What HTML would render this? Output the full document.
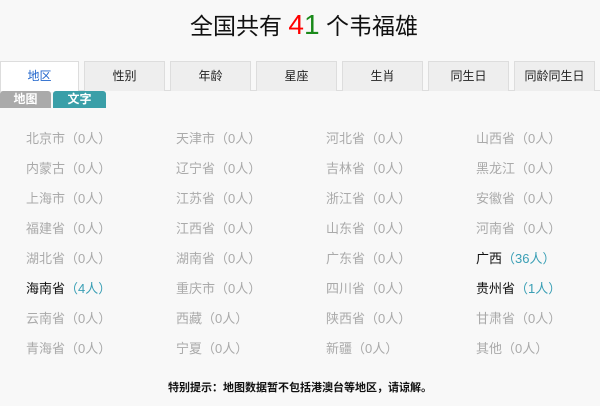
<!DOCTYPE html>
<html><head><meta charset="utf-8"><style>
*{margin:0;padding:0;box-sizing:border-box}
body{width:600px;height:406px;background:#f8f8f8;font-family:"Liberation Sans","Noto Sans CJK SC",sans-serif;position:relative;overflow:hidden}
.t{position:absolute;top:9px;left:0;width:608px;text-align:center;font-size:23px;color:#111;line-height:32px}
.t .a{color:#f00;font-size:28px}.t .b{color:#1a8a1a;font-size:28px}
.tabs{position:absolute;top:61px;left:0;width:600px;height:30px;border-bottom:1px solid #ddd}
.tab{position:absolute;top:0;height:30px;width:81px;background:#eee;border:1px solid #ddd;border-bottom:none;text-align:center;line-height:28px;font-size:12px;color:#222}
.tab.on{background:#fff;color:#2266cc;left:0;width:79px;height:31px}
.sub{position:absolute;top:91px;height:17px;font-size:12px;color:#fff;text-align:center;line-height:17px;font-weight:bold;border-radius:3px 3px 0 0}
.c{position:absolute;font-size:13px;color:#aaa;line-height:16px;white-space:nowrap}
.c.k{color:#111}.c span{color:#aaa}.c.k span{color:#3a9fb5}
.f{position:absolute;top:379px;left:0;width:600px;text-align:center;font-size:11px;color:#111;font-weight:bold}
</style></head><body>
<div class="t">全国共有 <span class="a">4</span><span class="b">1</span> 个韦福雄</div>
<div class="tabs">
<div class="tab on">地区</div>
<div class="tab" style="left:84px">性别</div>
<div class="tab" style="left:170px">年龄</div>
<div class="tab" style="left:256px">星座</div>
<div class="tab" style="left:342px">生肖</div>
<div class="tab" style="left:428px">同生日</div>
<div class="tab" style="left:514px">同龄同生日</div>
</div>
<div class="sub" style="left:0;width:51px;background:#aaa">地图</div>
<div class="sub" style="left:53px;width:53px;background:#3a9fa8">文字</div>

<div class="c" style="left:26px;top:131px">北京市<span>（0人）</span></div>
<div class="c" style="left:176px;top:131px">天津市<span>（0人）</span></div>
<div class="c" style="left:326px;top:131px">河北省<span>（0人）</span></div>
<div class="c" style="left:476px;top:131px">山西省<span>（0人）</span></div>
<div class="c" style="left:26px;top:161px">内蒙古<span>（0人）</span></div>
<div class="c" style="left:176px;top:161px">辽宁省<span>（0人）</span></div>
<div class="c" style="left:326px;top:161px">吉林省<span>（0人）</span></div>
<div class="c" style="left:476px;top:161px">黑龙江<span>（0人）</span></div>
<div class="c" style="left:26px;top:191px">上海市<span>（0人）</span></div>
<div class="c" style="left:176px;top:191px">江苏省<span>（0人）</span></div>
<div class="c" style="left:326px;top:191px">浙江省<span>（0人）</span></div>
<div class="c" style="left:476px;top:191px">安徽省<span>（0人）</span></div>
<div class="c" style="left:26px;top:221px">福建省<span>（0人）</span></div>
<div class="c" style="left:176px;top:221px">江西省<span>（0人）</span></div>
<div class="c" style="left:326px;top:221px">山东省<span>（0人）</span></div>
<div class="c" style="left:476px;top:221px">河南省<span>（0人）</span></div>
<div class="c" style="left:26px;top:251px">湖北省<span>（0人）</span></div>
<div class="c" style="left:176px;top:251px">湖南省<span>（0人）</span></div>
<div class="c" style="left:326px;top:251px">广东省<span>（0人）</span></div>
<div class="c k" style="left:476px;top:251px">广西<span>（36人）</span></div>
<div class="c k" style="left:26px;top:281px">海南省<span>（4人）</span></div>
<div class="c" style="left:176px;top:281px">重庆市<span>（0人）</span></div>
<div class="c" style="left:326px;top:281px">四川省<span>（0人）</span></div>
<div class="c k" style="left:476px;top:281px">贵州省<span>（1人）</span></div>
<div class="c" style="left:26px;top:311px">云南省<span>（0人）</span></div>
<div class="c" style="left:176px;top:311px">西藏<span>（0人）</span></div>
<div class="c" style="left:326px;top:311px">陕西省<span>（0人）</span></div>
<div class="c" style="left:476px;top:311px">甘肃省<span>（0人）</span></div>
<div class="c" style="left:26px;top:341px">青海省<span>（0人）</span></div>
<div class="c" style="left:176px;top:341px">宁夏<span>（0人）</span></div>
<div class="c" style="left:326px;top:341px">新疆<span>（0人）</span></div>
<div class="c" style="left:476px;top:341px">其他<span>（0人）</span></div>

<div class="f">特别提示：地图数据暂不包括港澳台等地区，请谅解。</div>
</body></html>
